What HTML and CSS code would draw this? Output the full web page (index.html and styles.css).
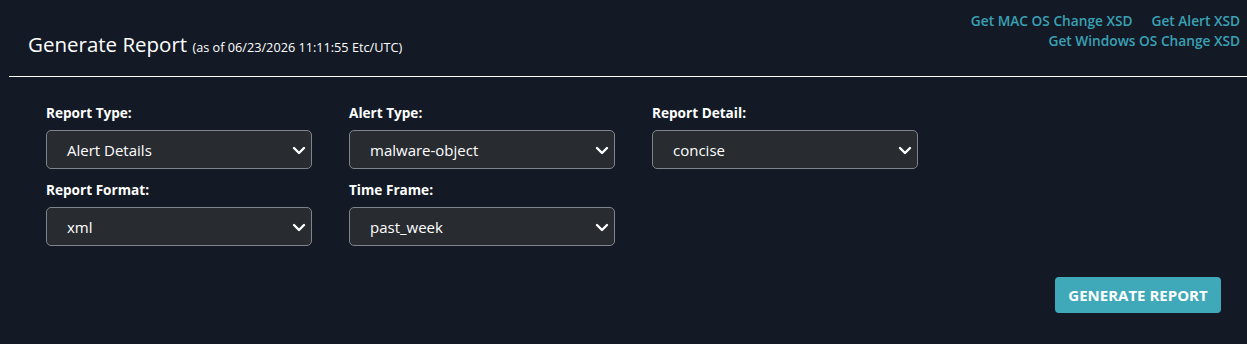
FILE: index.html
```html
<!DOCTYPE html>
<html lang="en">
<head>
  <meta charset="UTF-8">
  <title>Generate Report</title>
  <link rel="stylesheet" href="styles.css">
</head>
<body>
  <header class="page-head">
    <h1 class="title">Generate Report <small>(as of 06/23/2026 11:11:55 Etc/UTC)</small></h1>
    <div class="xsd-links">
      <div><a href="#">Get MAC OS Change XSD</a><a href="#">Get Alert XSD</a></div>
      <div><a href="#">Get Windows OS Change XSD</a></div>
    </div>
  </header>

  <form class="report-form">
    <div class="fields">
      <div class="field">
        <label>Report Type:</label>
        <div class="select"><span>Alert Details</span><svg viewBox="0 0 16 16"><path d="M3 6l5 5 5-5"/></svg></div>
      </div>
      <div class="field">
        <label>Alert Type:</label>
        <div class="select"><span>malware-object</span><svg viewBox="0 0 16 16"><path d="M3 6l5 5 5-5"/></svg></div>
      </div>
      <div class="field">
        <label>Report Detail:</label>
        <div class="select"><span>concise</span><svg viewBox="0 0 16 16"><path d="M3 6l5 5 5-5"/></svg></div>
      </div>
      <div class="field">
        <label>Report Format:</label>
        <div class="select"><span>xml</span><svg viewBox="0 0 16 16"><path d="M3 6l5 5 5-5"/></svg></div>
      </div>
      <div class="field">
        <label>Time Frame:</label>
        <div class="select"><span>past_week</span><svg viewBox="0 0 16 16"><path d="M3 6l5 5 5-5"/></svg></div>
      </div>
    </div>
    <div class="actions">
      <button type="button" class="btn-generate">GENERATE REPORT</button>
    </div>
  </form>
</body>
</html>
```

FILE: styles.css
```css
body {
  margin: 0;
  background: #131a25;
  color: #fff;
  font-family: "Open Sans", "Liberation Sans", sans-serif;
}

.page-head {
  display: flex;
  justify-content: space-between;
  align-items: flex-start;
  height: 76px;
  margin-left: 9px;
  padding: 0 7px 0 19px;
  border-bottom: 1px solid #fff;
}
.title {
  margin: 0;
  padding-top: 30px;
  font-size: 20.5px;
  line-height: 28px;
  font-weight: 400;
}
.title small {
  font-size: 12.7px;
}
.xsd-links {
  padding-top: 11px;
  text-align: right;
  font-size: 13.7px;
  line-height: 20px;
  font-weight: 600;
}
.xsd-links a {
  color: #3aa1b5;
  text-decoration: none;
  margin-left: 19px;
}

.report-form {
  padding: 27px 26px 0 46px;
}
.fields {
  display: grid;
  grid-template-columns: repeat(3, 266px);
  column-gap: 37px;
  row-gap: 12px;
}
.field label {
  display: block;
  font-size: 13.6px;
  font-weight: 700;
  line-height: 18px;
  margin-bottom: 8px;
}
.select {
  display: flex;
  align-items: center;
  justify-content: space-between;
  height: 39px;
  box-sizing: border-box;
  padding: 0 4px 0 20px;
  background: #282b30;
  border: 1px solid #80848a;
  border-radius: 5px;
  font-size: 15px;
}
.select svg {
  width: 16px;
  height: 16px;
  fill: none;
  stroke: #fff;
  stroke-width: 2.4;
  stroke-linecap: round;
  stroke-linejoin: round;
}

.actions {
  display: flex;
  justify-content: flex-end;
  margin-top: 31px;
}
.btn-generate {
  height: 36px;
  width: 166px;
  background: #40a9b9;
  color: #fff;
  border: none;
  border-radius: 4px;
  font-family: inherit;
  font-size: 15px;
  font-weight: 700;
  cursor: pointer;
}
```
